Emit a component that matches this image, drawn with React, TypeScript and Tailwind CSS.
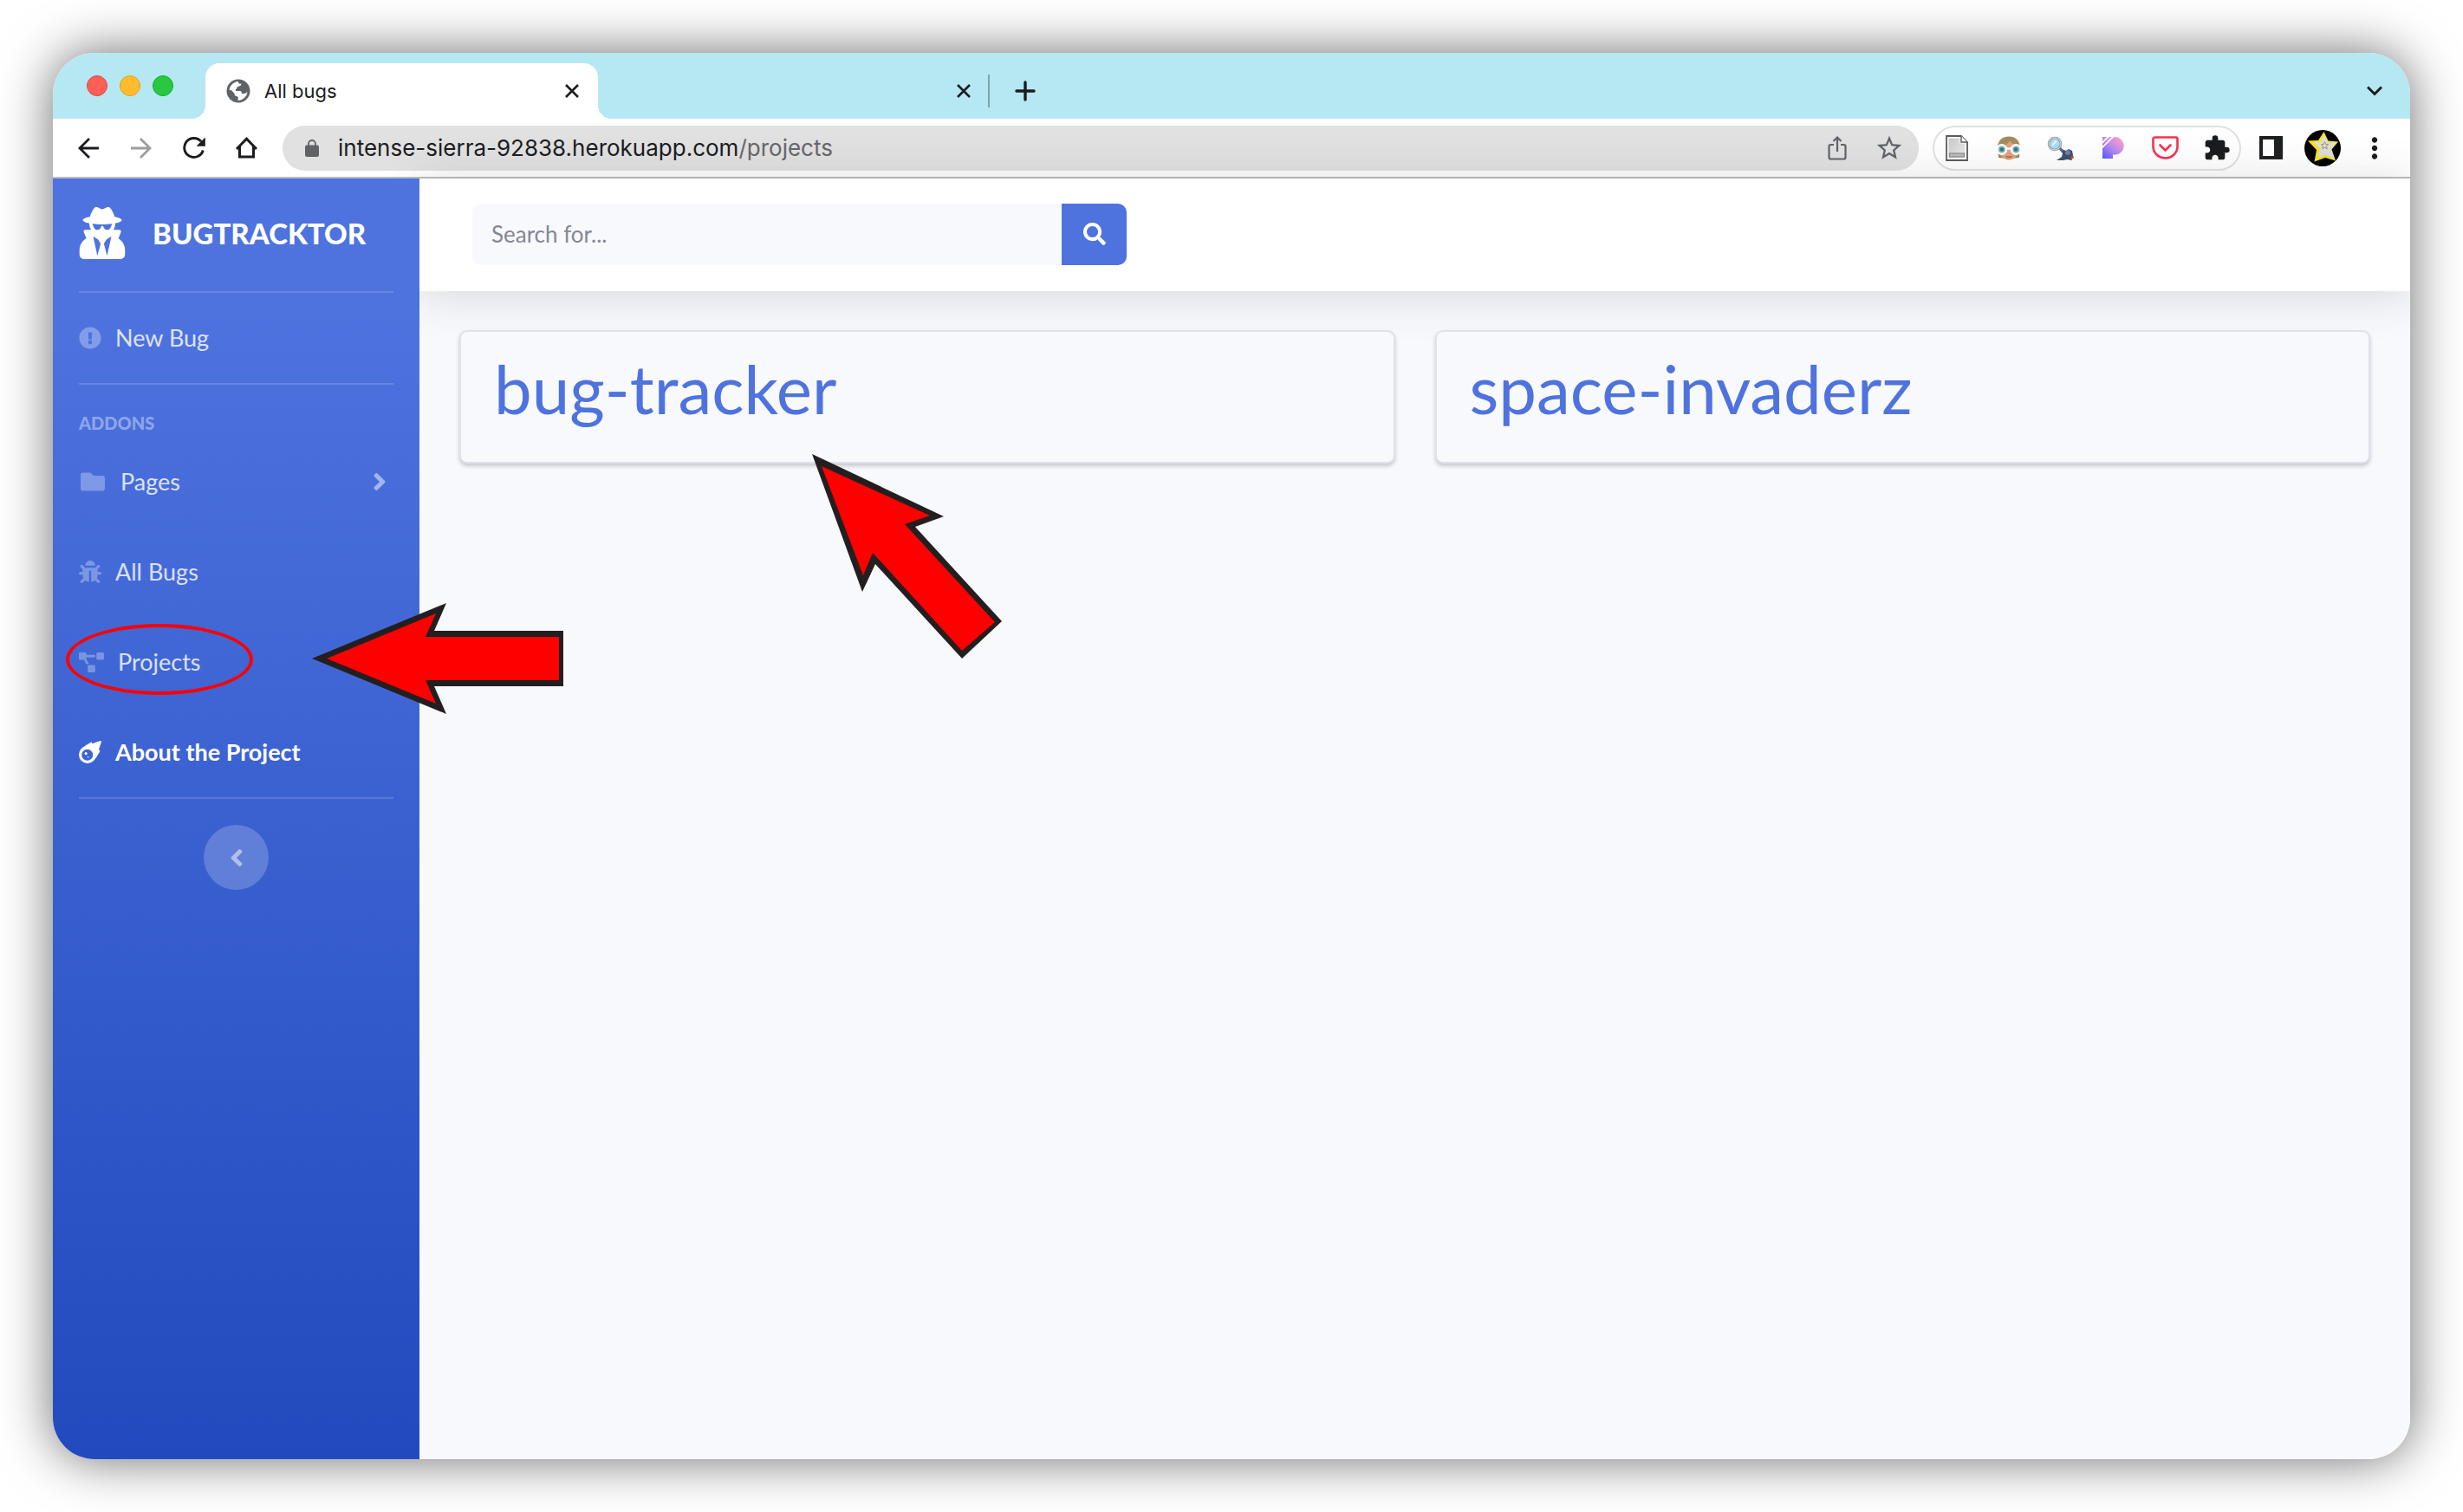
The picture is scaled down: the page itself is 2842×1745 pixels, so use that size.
import type { ReactNode } from "react";
import {
  FaAngleLeft,
  FaAngleRight,
  FaBug,
  FaExclamationCircle,
  FaFolder,
  FaMeteor,
  FaProjectDiagram,
  FaSearch,
  FaUserSecret,
} from "react-icons/fa";
import { MdExtension, MdMoreVert, MdStarOutline } from "react-icons/md";

function CloseGlyph() {
  return (
    <svg viewBox="0 0 16 16" className="size-4" fill="none" stroke="currentColor" strokeWidth="2.6">
      <path d="M1 1l14 14M15 1L1 15" />
    </svg>
  );
}

function GlobeIcon() {
  return (
    <svg viewBox="0 0 28 28" className="size-7 shrink-0">
      <circle cx="14" cy="14" r="13.5" fill="#5f6368" />
      <path
        d="M3.500 12.500C4.500 7.500 8.500 3.500 14 3c-.5 2 1 3 3.500 2.500 0 2.500-2 3-4 3.500-1.500.5-.5 2.500-2.500 3v2h5c1.500 0 2 1 2 3H20.500c2 0 2.500-1 4-2C24 20.500 19 25 13.500 25c0-2 1-3.500-.5-4.500-2-.5-3.500-1-3.500-3.500l-3-3.500z"
        fill="#fff"
      />
    </svg>
  );
}

function BackIcon() {
  return (
    <svg viewBox="0 0 24 24" className="size-6" fill="none" stroke="currentColor" strokeWidth="2.8">
      <path d="M24 12H2M13 1L2 12l11 11" />
    </svg>
  );
}

function ForwardIcon() {
  return (
    <svg viewBox="0 0 24 24" className="size-6" fill="none" stroke="currentColor" strokeWidth="2.8">
      <path d="M0 12h22M11 1l11 11-11 11" />
    </svg>
  );
}

function ReloadIcon() {
  return (
    <svg viewBox="0 0 26 25" className="h-[25px] w-[26px]">
      <path d="M23.300 15.500A11 11 0 1 1 21 5.200" fill="none" stroke="currentColor" strokeWidth="2.9" />
      <path d="M25.800 .5v10.300H15.500z" fill="currentColor" />
    </svg>
  );
}

function HomeIcon() {
  return (
    <svg viewBox="0 0 25 25" className="size-[25px]" fill="none" stroke="currentColor" strokeWidth="3">
      <path d="M1 14L12.500 2.200 24 14M4.500 11v12h16V11" />
    </svg>
  );
}

function LockIcon() {
  return (
    <svg viewBox="0 0 16 20" className="h-5 w-4">
      <rect y="6.500" width="16" height="13.500" rx="2" fill="#5f6368" />
      <path d="M4 8V5a4 4 0 0 1 8 0v3" fill="none" stroke="#5f6368" strokeWidth="1.800" />
    </svg>
  );
}

function ShareIcon() {
  return (
    <svg viewBox="0 0 24 30" className="h-[30px] w-6" fill="none" stroke="#5f6368" strokeWidth="2.2">
      <path d="M8 11H4.500a2 2 0 0 0-2 2v12.500a2 2 0 0 0 2 2h15a2 2 0 0 0 2-2V13a2 2 0 0 0-2-2H16M12 19V3M7.500 7L12 2.500 16.500 7" />
    </svg>
  );
}

function DocumentIcon() {
  return (
    <svg viewBox="0 0 26 30" className="h-[30px] w-[26px]">
      <defs>
        <linearGradient id="paper" x1="0" y1="0" x2="1" y2="1">
          <stop offset="0" stopColor="#c9c9c9" />
          <stop offset="1" stopColor="#ececec" />
        </linearGradient>
      </defs>
      <path d="M1 1h17l7 7v21H1z" fill="#fff" stroke="#5b5b5b" strokeWidth="1.800" />
      <path d="M3.500 3.500h13v6h6v17h-19z" fill="url(#paper)" />
      <path d="M18 1v7h7" fill="#fff" stroke="#5b5b5b" strokeWidth="1.400" />
      <rect x="4.500" y="21" width="17" height="4" fill="#bbb" stroke="#8b8b8b" strokeWidth="1.200" />
    </svg>
  );
}

function GogglesIcon() {
  return (
    <svg viewBox="0 0 30 28" className="h-7 w-[30px]">
      <path d="M2 13C2 5 8 .5 15 .5S28 5 27.500 13L27 25l-5 .5H8L3 25z" fill="#a58a5e" />
      <path d="M5 13c4-1 9-4 11-7.500 2 3 6 5 9 6.500v9c-2 4-6 6.500-10 6.500S7 25 5 21z" fill="#e0a27c" />
      <path d="M11.500 23.500q3.500 1.500 7 0" fill="none" stroke="#b4605a" strokeWidth="1.500" />
      <path d="M10 14.500h10" stroke="#fff" strokeWidth="2.500" />
      <circle cx="6.800" cy="15.500" r="5.200" fill="#7fb9c4" stroke="#fff" strokeWidth="2.400" />
      <circle cx="23.200" cy="15.500" r="5.200" fill="#7fb9c4" stroke="#fff" strokeWidth="2.400" />
      <circle cx="7" cy="15.500" r="2.200" fill="#3d6f7c" />
      <circle cx="23" cy="15.500" r="2.200" fill="#3d6f7c" />
    </svg>
  );
}

function MagnifierIcon() {
  return (
    <svg viewBox="0 0 32 28" className="h-7 w-8">
      <path d="M11 28l6-4 1-4-2-3 1-2 5 2 3-2 4 2 1 5-2 3 1 3-6-1-4 1z" fill="#3f4f6d" />
      <path d="M14 13l4 5" stroke="#56688b" strokeWidth="3" />
      <circle cx="24" cy="19" r="3" fill="#6c7fa3" />
      <path d="M27 24l3-2 1 3-3 2z" fill="#b4502c" />
      <circle cx="9" cy="9" r="7" fill="#a9dcf7" stroke="#8794a0" strokeWidth="2.600" />
      <circle cx="9" cy="9" r="7" fill="none" stroke="#dfe8ee" strokeWidth="1" />
      <path d="M6 11l5-6" stroke="#e4f6ff" strokeWidth="2" />
    </svg>
  );
}

function PIcon() {
  return (
    <svg viewBox="0 0 25 25" className="size-[25px]">
      <defs>
        <linearGradient id="pfill" x1="0.900" y1="0.100" x2="0.100" y2="1">
          <stop offset="0" stopColor="#ff9fc8" />
          <stop offset="0.500" stopColor="#b98af0" />
          <stop offset="1" stopColor="#5d5bff" />
        </linearGradient>
      </defs>
      <path d="M0 0h14.500a10.200 10.200 0 0 1 0 20.500H12V25H0z" fill="url(#pfill)" />
      <path d="M-1 7.500L7.500-1M-1 13L13-1" stroke="#fff" strokeWidth="1.800" />
    </svg>
  );
}

function PocketIcon() {
  return (
    <svg viewBox="0 0 31 27" className="h-[27px] w-[31px]" fill="none" stroke="#f5334f" strokeWidth="2.600" strokeLinecap="round" strokeLinejoin="round">
      <path d="M3.500 1.500h24a2 2 0 0 1 2 2v8.500a14 13.500 0 0 1-28 0V3.500a2 2 0 0 1 2-2z" />
      <path d="M9.500 10.500l6 6 6-6" />
    </svg>
  );
}

function StarAvatar() {
  return (
    <svg viewBox="0 0 42 42" className="size-[42px]">
      <circle cx="21" cy="21" r="21" fill="#000" />
      <path d="M22.500 2l5 10.500 11.500 1-7.500 9 4.500 13-12-3.500-12.500 4.500 2.500-13.500L4 12.500l12-.5z" fill="#f9e31c" />
      <path d="M23.500 5.500l3.500 9 10.500 0-7 7.500 4.500 11.500-11-5-8.500 3.500 2.500-10.500-8-8 8.500.5z" fill="#dcdce0" />
      <path d="M23.500 13.500l1.200 3 3 .2-2.300 2 .8 3-2.700-1.600-2.700 1.600.8-3-2.300-2 3-.2z" fill="none" stroke="#a99a4a" strokeWidth="1" />
    </svg>
  );
}

function IconButton({ label, children, className = "w-[60px]" }: { label: string; children: ReactNode; className?: string }) {
  return (
    <button type="button" aria-label={label} className={`flex shrink-0 items-center justify-center ${className}`}>
      {children}
    </button>
  );
}

function TabStrip() {
  return (
    <div className="flex h-[76px] items-end bg-[#b5e8f3] pl-[39px] text-[#1b1c1f]">
      <div className="flex h-full w-[137px] items-center gap-[14px]">
        <button type="button" aria-label="Close window" className="size-6 rounded-full border border-[#e2463f] bg-[#ff5f57]" />
        <button type="button" aria-label="Minimize window" className="size-6 rounded-full border border-[#e1a116] bg-[#febc2e]" />
        <button type="button" aria-label="Zoom window" className="size-6 rounded-full border border-[#12ac28] bg-[#28c840]" />
      </div>
      <div className="relative flex h-16 w-[453px] items-center rounded-t-2xl bg-white pr-[22px] pl-6">
        <span className="absolute bottom-0 -left-4 size-4 bg-[radial-gradient(circle_at_top_left,#b5e8f3_16px,#fff_16px)]" />
        <span className="absolute -right-4 bottom-0 size-4 bg-[radial-gradient(circle_at_top_right,#b5e8f3_16px,#fff_16px)]" />
        <GlobeIcon />
        <span className="ml-4 text-[22px]">All bugs</span>
        <button type="button" aria-label="Close tab" className="ml-auto"><CloseGlyph /></button>
      </div>
      <div className="flex h-16 w-[450px] items-center justify-end pr-5">
        <button type="button" aria-label="Close second tab"><CloseGlyph /></button>
      </div>
      <div className="flex h-16 items-center">
        <span className="h-[38px] w-[2px] bg-[#7fa5ac]" />
        <button type="button" aria-label="New tab" className="ml-[29px]">
          <svg viewBox="0 0 24 24" className="size-6" stroke="currentColor" strokeWidth="3.400" strokeLinecap="round">
            <path d="M12 2v20M2 12h20" />
          </svg>
        </button>
      </div>
      <button type="button" aria-label="Search tabs" className="mr-8 mb-[26px] ml-auto">
        <svg viewBox="0 0 18 12" className="h-3 w-[18px]" fill="none" stroke="currentColor" strokeWidth="3">
          <path d="M1 1.500l8 8 8-8" />
        </svg>
      </button>
    </div>
  );
}

function Toolbar() {
  return (
    <div className="flex h-[69px] items-center border-b-2 border-[#bdbdbd] bg-white px-[11px] text-[#1b1c1f]">
      <IconButton label="Back"><BackIcon /></IconButton>
      <IconButton label="Forward" className="w-[62px] text-[#9b9c9e]"><ForwardIcon /></IconButton>
      <IconButton label="Reload"><ReloadIcon /></IconButton>
      <IconButton label="Home"><HomeIcon /></IconButton>
      <div className="ml-3 flex h-[52px] flex-1 items-center rounded-full bg-[#e1e1e1] pr-1 pl-[26px]">
        <LockIcon />
        <p className="ml-[22px] flex-1 text-[26px]">
          intense-sierra-92838.herokuapp.com<span className="text-[#66676a]">/projects</span>
        </p>
        <IconButton label="Share"><ShareIcon /></IconButton>
        <IconButton label="Bookmark"><MdStarOutline size={34} className="text-[#5f6368]" /></IconButton>
      </div>
      <div className="mr-1 ml-4 flex h-[52px] items-center gap-2 rounded-full border-2 border-[#e1e1e1]">
        <IconButton label="Reader" className="w-[52px]"><DocumentIcon /></IconButton>
        <IconButton label="Goggles" className="w-[52px]"><GogglesIcon /></IconButton>
        <IconButton label="Inspector" className="w-[52px]"><MagnifierIcon /></IconButton>
        <IconButton label="Picture tool" className="w-[52px]"><PIcon /></IconButton>
        <IconButton label="Pocket" className="w-[52px]"><PocketIcon /></IconButton>
        <IconButton label="Extensions" className="w-[52px]"><MdExtension size={32} /></IconButton>
      </div>
      <IconButton label="Side panel">
        <svg viewBox="0 0 27 27" className="size-[27px]">
          <rect width="27" height="27" fill="#1f2023" />
          <rect x="4" y="4" width="13" height="19" fill="#fff" />
        </svg>
      </IconButton>
      <IconButton label="Profile"><StarAvatar /></IconButton>
      <IconButton label="Menu"><MdMoreVert size={38} /></IconButton>
    </div>
  );
}

function Divider() {
  return <hr className="mx-[30px] border-t-2 border-white/15" />;
}

const outline = "#231f20";

function Sidebar() {
  return (
    <nav className="relative z-10 flex w-[423px] shrink-0 flex-col bg-[linear-gradient(180deg,#4e73df_10%,#224abe_100%)] font-['Lato',sans-serif] text-[27px] leading-8 text-white/80">
      <a href="#home" className="flex h-[130px] items-center gap-[31px] pb-1 pl-[30px] text-white">
        <FaUserSecret className="h-[60px] w-[54px]" />
        <span className="text-[33px] font-black">BUGTRACKTOR</span>
      </a>
      <Divider />
      <a href="#new" className="flex h-[104px] items-center gap-4 pl-[30px]">
        <FaExclamationCircle size={26} className="text-white/30" />
        New Bug
      </a>
      <Divider />
      <h2 className="mt-7 pl-[30px] text-xl leading-8 font-black text-white/40">ADDONS</h2>
      <a href="#pages" className="flex h-[104px] items-center gap-[18px] pr-[30px] pl-8">
        <FaFolder size={28} className="text-white/30" />
        Pages
        <FaAngleRight size={32} className="ml-auto text-white/50" />
      </a>
      <a href="#bugs" className="flex h-[104px] items-center gap-4 pl-[30px]">
        <FaBug size={26} className="text-white/30" />
        All Bugs
      </a>
      <a href="#projects" className="relative flex h-[104px] items-center gap-4 pl-[30px]">
        <FaProjectDiagram size={29} className="text-white/30" />
        Projects
        <span className="absolute top-[8px] left-[15px] h-[82px] w-[216px] rounded-[50%] border-4 border-[#fe0000]" />
        <svg viewBox="360 695 290 128" className="absolute top-[-16px] left-[299px] h-32 w-[290px]">
          <polygon points="360,759 515,695 501,727 650,727 650,791 501,791 515,823" fill={outline} />
          <polygon points="377,759 503,707 491,734 645,734 645,784 491,784 503,811" fill="#fe0000" />
        </svg>
      </a>
      <a href="#about" className="flex h-[104px] items-center gap-4 pl-[30px] font-bold text-white">
        <FaMeteor size={26} />
        About the Project
      </a>
      <Divider />
      <button type="button" aria-label="Collapse sidebar" className="mt-[30px] flex size-[75px] items-center justify-center self-center rounded-full bg-white/20 text-white/50">
        <FaAngleLeft size={32} />
      </button>
    </nav>
  );
}

function ProjectCard({ name, children }: { name: string; children?: ReactNode }) {
  return (
    <article className="relative h-[154px] rounded-[9px] border-2 border-[#dfe1ec] bg-[#f8f9fc] px-[38px] pt-5 shadow-[0_3px_4px_rgba(58,59,69,0.25)]">
      <a href={`#${name}`} className="block text-[78px] leading-[90px] text-[#4e73df]">{name}</a>
      {children}
    </article>
  );
}

export default function App() {
  return (
    <div className="flex min-h-screen bg-white p-[61px] font-['Inter',sans-serif]">
      <div className="flex flex-1 flex-col overflow-hidden rounded-[48px] shadow-[0_0_60px_rgba(0,0,0,0.58)]">
        <TabStrip />
        <Toolbar />
        <div className="flex flex-1">
          <Sidebar />
          <div className="flex flex-1 flex-col bg-[#f8f9fc] font-['Lato',sans-serif]">
            <header className="flex h-[130px] items-center bg-white pb-[2px] pl-[61px] shadow-[0_4px_53px_rgba(58,59,69,0.18)]">
              <form className="flex h-[71px] w-[755px]">
                <input
                  type="text"
                  aria-label="Search for"
                  placeholder="Search for..."
                  className="min-w-0 flex-1 rounded-l-[10px] bg-[#f8f9fc] px-[22px] text-[26px] text-[#6e707e] placeholder:text-[#858796]"
                />
                <button type="button" aria-label="Search" className="flex w-[75px] items-center justify-center rounded-r-[10px] bg-[#4e73df] text-white">
                  <FaSearch size={26} />
                </button>
              </form>
            </header>
            <main className="grid grid-cols-2 gap-[46px] px-[46px] pt-[45px]">
              <ProjectCard name="bug-tracker">
                <svg viewBox="937 523 219 236" className="absolute top-[141px] left-[405px] z-10 h-[236px] w-[219px]">
                  <polygon points="937,523 1089,595 1056,607 1156,716 1110,759 1010,650 995,682" fill={outline} />
                  <polygon points="948,537 1073,594 1044,604 1148,717 1110,750 1007,637 996,663" fill="#fe0000" />
                </svg>
              </ProjectCard>
              <ProjectCard name="space-invaderz" />
            </main>
          </div>
        </div>
      </div>
    </div>
  );
}
